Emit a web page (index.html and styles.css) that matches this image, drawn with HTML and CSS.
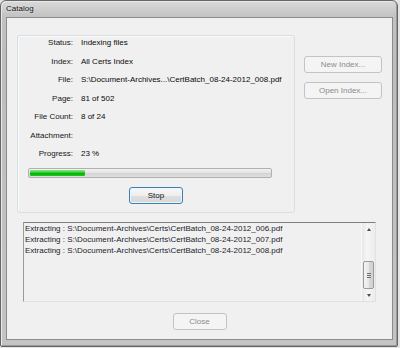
FILE: index.html
```html
<!DOCTYPE html>
<html lang="en">
<head>
    <meta charset="UTF-8">
    <title>Catalog</title>
    <link rel="stylesheet" href="styles.css">
</head>
<body>
<div class="window">
    <div class="titlebar">Catalog</div>
    <div class="client">
        <div class="top">
            <div class="group">
                <div class="fields">
                    <span class="lbl">Status:</span><span>Indexing files</span>
                    <span class="lbl">Index:</span><span>All Certs Index</span>
                    <span class="lbl">File:</span><span>S:\Document-Archives...\CertBatch_08-24-2012_008.pdf</span>
                    <span class="lbl">Page:</span><span>81 of 502</span>
                    <span class="lbl">File Count:</span><span>8 of 24</span>
                    <span class="lbl">Attachment:</span><span></span>
                    <span class="lbl">Progress:</span><span>23 %</span>
                </div>
                <div class="progress"><div class="fill" style="width: 23%"></div></div>
                <div class="stop-row"><button class="btn focused">Stop</button></div>
            </div>
            <div class="side">
                <button class="btn side-btn" disabled>New Index...</button>
                <button class="btn side-btn" disabled>Open Index...</button>
            </div>
        </div>
        <div class="log">
            <div class="log-text">
                <div>Extracting : S:\Document-Archives\Certs\CertBatch_08-24-2012_006.pdf</div>
                <div>Extracting : S:\Document-Archives\Certs\CertBatch_08-24-2012_007.pdf</div>
                <div>Extracting : S:\Document-Archives\Certs\CertBatch_08-24-2012_008.pdf</div>
            </div>
            <div class="scrollbar">
                <div class="arrow up"></div>
                <div class="track"><div class="thumb"><i></i><i></i><i></i></div></div>
                <div class="arrow down"></div>
            </div>
        </div>
        <div class="bottom"><button class="btn close-btn" disabled>Close</button></div>
    </div>
</div>
</body>
</html>
```

FILE: styles.css
```css
html, body {
    margin: 0;
    padding: 0;
    background-color: #e4e4e4;
}
body {
    font-family: "Liberation Sans", Arial, sans-serif;
    font-size: 8px;
    color: #111;
}
.window {
    width: 398px;
    height: 347px;
    box-sizing: border-box;
    border: 1px solid #666;
    border-radius: 6px 6px 2px 2px;
    background: linear-gradient(#d9d9d9, #c2c2c2 16px, #bdbdbd 60px, #c4c4c4);
    box-shadow: inset 1px 1px 0 #e9e9e9, inset -1px -1px 0 #9a9a9a;
    padding: 0 4px 6px 5px;
    display: flex;
    flex-direction: column;
}
.titlebar {
    height: 16px;
    line-height: 16px;
    font-size: 8px;
    color: #111;
    text-shadow: 0 0 3px rgba(255, 255, 255, 0.8);
}
.client {
    flex: 1;
    border: 1px solid #8c8c8c;
    background-color: #f0f0f0;
    display: flex;
    flex-direction: column;
}
.top {
    display: flex;
    padding: 17px 0 0 10px;
    gap: 9px;
}
.group {
    width: 278px;
    height: 178px;
    box-sizing: border-box;
    border: 1px solid #d5dfe5;
    border-radius: 3px;
    box-shadow: inset 1px 1px 0 #fbfbfb;
    padding: 0 22px 0 10px;
}
.fields {
    display: grid;
    grid-template-columns: 45px 1fr;
    column-gap: 8px;
    row-gap: 4.5px;
    line-height: 14px;
    color: #0a0a0a;
    white-space: nowrap;
}
.lbl {
    text-align: right;
    color: #161616;
}
.progress {
    margin-top: 7px;
    height: 10px;
    box-sizing: border-box;
    border: 1px solid #b0b0b0;
    border-radius: 2px;
    background: linear-gradient(#f3f3f3, #e2e2e2 50%, #d4d4d4 51%, #dedede);
    padding: 1px;
}
.fill {
    height: 100%;
    border-radius: 1px;
    background: linear-gradient(#8fe88f, #2bcc2b 45%, #07b007 55%, #22c322);
}
.stop-row {
    display: flex;
    justify-content: center;
    padding-left: 12px;
    margin-top: 9px;
}
.btn {
    font-family: "Liberation Sans", Arial, sans-serif;
    font-size: 8px;
    height: 17px;
    padding: 0;
    box-sizing: border-box;
    border: 1px solid #707070;
    border-radius: 3px;
    background: linear-gradient(#f2f2f2, #ebebeb 50%, #dddddd 51%, #cfcfcf);
    color: #111;
}
.btn.focused {
    width: 54px;
    border-color: #3c7fb1;
    box-shadow: inset 0 0 0 1px #eaf6fd;
    background: linear-gradient(#f7f7f7, #eeeeee 50%, #e0e0e0 51%, #d6d6d6);
}
.btn:disabled {
    border-color: #c0c4c6;
    background: #f4f4f4;
    color: #8b8b8b;
}
.side {
    display: flex;
    flex-direction: column;
    gap: 9px;
    padding-top: 21px;
}
.side-btn {
    width: 78px;
}
.log {
    margin: 9px 0 0 16px;
    width: 353px;
    height: 80px;
    box-sizing: border-box;
    border-top: 1px solid #7e7e7e;
    border-left: 1px solid #9a9a9a;
    border-right: 1px solid #e1e1e1;
    border-bottom: 1px solid #e1e1e1;
    background-color: #f0f0f0;
    display: flex;
}
.log-text {
    flex: 1;
    padding-left: 1px;
    line-height: 11px;
    color: #1c1c2a;
    white-space: nowrap;
}
.scrollbar {
    width: 13px;
    display: flex;
    flex-direction: column;
    background: linear-gradient(90deg, #e8e8e8, #f5f5f5 40%, #ececec);
    border-left: 1px solid #f8f8f8;
}
.arrow {
    height: 12px;
    display: flex;
    align-items: center;
    justify-content: center;
}
.arrow::after {
    content: "";
    border-left: 2.5px solid transparent;
    border-right: 2.5px solid transparent;
}
.arrow.up::after {
    border-bottom: 3px solid #4d4d4d;
}
.arrow.down::after {
    border-top: 3px solid #4d4d4d;
}
.track {
    flex: 1;
    display: flex;
    flex-direction: column;
    justify-content: flex-end;
    align-items: center;
}
.thumb {
    width: 11px;
    height: 28px;
    box-sizing: border-box;
    border: 1px solid #9a9a9a;
    border-radius: 2px;
    background: linear-gradient(90deg, #f4f4f4, #e8e8e8 50%, #d8d8d8 51%, #d2d2d2);
    display: flex;
    flex-direction: column;
    align-items: center;
    justify-content: center;
    gap: 1px;
}
.thumb i {
    display: block;
    width: 4px;
    height: 1px;
    background-color: #6f6f6f;
}
.bottom {
    display: flex;
    justify-content: center;
    margin-top: 11px;
}
.close-btn {
    width: 54px;
}
```
